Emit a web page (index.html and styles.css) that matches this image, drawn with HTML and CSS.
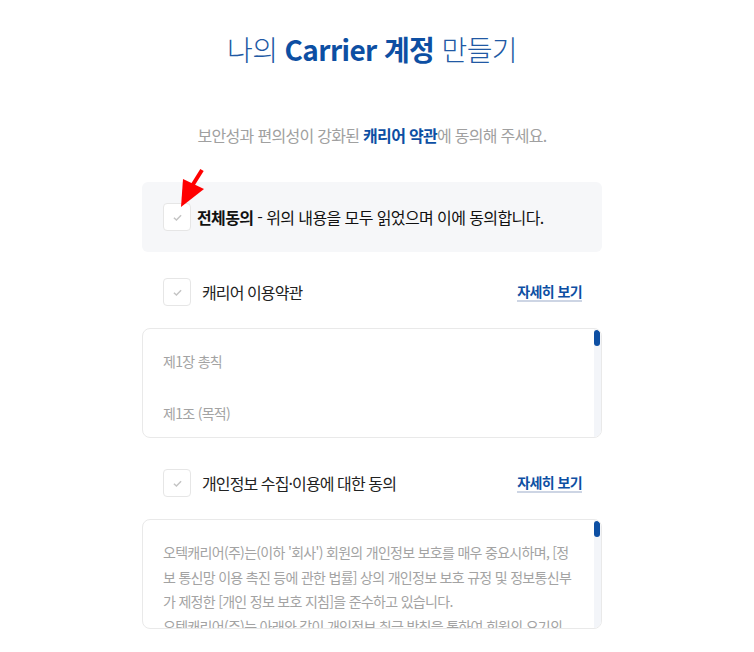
FILE: index.html
```html
<!DOCTYPE html>
<html lang="ko">

<head>
  <meta charset="UTF-8" />
  <meta name="viewport" content="width=device-width, initial-scale=1.0" />
  <title>나의 Carrier 계정 만들기</title>
  <link rel="stylesheet" href="styles.css">
</head>

<body>

  <div class="page">
    <h1 class="title">나의 <strong>Carrier 계정</strong> 만들기</h1>
    <p class="lead">보안성과 편의성이 강화된 <strong>캐리어 약관</strong>에 동의해 주세요.</p>

    <div class="agree-all">
      <label class="check-row">
        <span class="check"><svg viewBox="0 0 12 10"><path d="M2 5.2 L4.8 7.8 L10 2.4" /></svg></span>
        <span class="agree-all-text"><b>전체동의</b> - 위의 내용을 모두 읽었으며 이에 동의합니다.</span>
      </label>
      <!-- annotation arrow -->
      <svg class="pointer" viewBox="0 0 26 41" xmlns="http://www.w3.org/2000/svg">
        <line x1="22" y1="2" x2="12" y2="18" stroke="#f00" stroke-width="4" />
        <polygon points="3,11 24,21 1,39" fill="#f00" />
      </svg>
    </div>

    <div class="term">
      <div class="term-head">
        <label class="check-row">
          <span class="check"><svg viewBox="0 0 12 10"><path d="M2 5.2 L4.8 7.8 L10 2.4" /></svg></span>
          <span class="term-name">캐리어 이용약관</span>
        </label>
        <a class="more" href="#">자세히 보기</a>
      </div>
      <div class="term-box">
        <div class="term-text">
          <p class="chapter">제1장 총칙</p>
          <p class="article">제1조 (목적)</p>
        </div>
        <span class="scrollbar"><span class="thumb"></span></span>
      </div>
    </div>

    <div class="term">
      <div class="term-head">
        <label class="check-row">
          <span class="check"><svg viewBox="0 0 12 10"><path d="M2 5.2 L4.8 7.8 L10 2.4" /></svg></span>
          <span class="term-name">개인정보 수집·이용에 대한 동의</span>
        </label>
        <a class="more" href="#">자세히 보기</a>
      </div>
      <div class="term-box">
        <div class="term-text">
          <p>오텍캐리어(주)는(이하 '회사') 회원의 개인정보 보호를 매우 중요시하며, [정보 통신망 이용 촉진 등에 관한 법률] 상의 개인정보 보호 규정 및 정보통신부가 제정한 [개인 정보 보호 지침]을 준수하고 있습니다.</p>
          <p>오텍캐리어(주)는 아래와 같이 개인정보 취급 방침을 통하여 회원의 요기의</p>
        </div>
        <span class="scrollbar"><span class="thumb"></span></span>
      </div>
    </div>
  </div>

</body>

</html>
```

FILE: styles.css
```css
body {
  margin: 0;
  padding: 0;
  background: #ffffff;
  color: #222222;
  font-family: "Noto Sans CJK KR", "Noto Sans", sans-serif;
}

.page {
  width: 460px;
  margin: 0 auto;
  padding: 29px 10px 20px 0;
}

.title {
  margin: 0;
  text-align: center;
  font-size: 28px;
  font-weight: 300;
  line-height: 40px;
  letter-spacing: -0.6px;
  color: #2159a4;
}

.title strong {
  font-weight: 700;
  color: #0d4fa3;
}

.lead {
  margin: 55px 0 0;
  text-align: center;
  font-size: 16px;
  line-height: 22px;
  letter-spacing: -0.7px;
  color: #a0a0a0;
}

.lead strong {
  font-weight: 700;
  color: #0d4fa3;
}

.agree-all {
  position: relative;
  margin-top: 36px;
  padding: 21px 21px;
  background: #f6f7f9;
  border-radius: 6px;
}

.check-row {
  display: flex;
  align-items: center;
  cursor: pointer;
}

.check {
  flex: none;
  width: 26px;
  height: 26px;
  border: 1px solid #e6e6e6;
  border-radius: 4px;
  background: #ffffff;
  display: flex;
  align-items: center;
  justify-content: center;
}

.check svg {
  width: 11px;
  height: 9px;
  fill: none;
  stroke: #c4c4c4;
  stroke-width: 1.6;
}

.agree-all-text {
  margin-left: 6px;
  font-size: 16px;
  letter-spacing: -0.6px;
  color: #111111;
}

.agree-all-text b {
  font-weight: 700;
}

.pointer {
  position: absolute;
  left: 38px;
  top: -14px;
  width: 26px;
  height: 41px;
}

.term {
  margin-top: 26px;
}

.term + .term {
  margin-top: 31px;
}

.term-head {
  display: flex;
  align-items: center;
  justify-content: space-between;
  padding: 0 20px 0 21px;
}

.term-name {
  margin-left: 11px;
  font-size: 16px;
  letter-spacing: -0.9px;
  color: #222222;
}

.more {
  font-size: 14px;
  font-weight: 700;
  letter-spacing: -0.6px;
  color: #0d4fa3;
  text-decoration: none;
  border-bottom: 2px solid #cdd5e4;
  line-height: 18px;
}

.term-box {
  position: relative;
  margin-top: 22px;
  height: 108px;
  overflow: hidden;
  border: 1px solid #e9e9e9;
  border-radius: 8px;
}

.term-text {
  padding: 20px 27px 0 20px;
  font-size: 14px;
  line-height: 24.5px;
  letter-spacing: -0.7px;
  color: #a3a3a3;
}

.term-text p {
  margin: 0;
}

.term-text .chapter {
  margin-bottom: 27px;
}

.scrollbar {
  position: absolute;
  top: 0;
  right: 0;
  bottom: 0;
  width: 7px;
  background: #f3f5f9;
}

.thumb {
  display: block;
  width: 6px;
  height: 16px;
  margin-top: 1px;
  border-radius: 3px;
  background: #0d4fa3;
}
```
